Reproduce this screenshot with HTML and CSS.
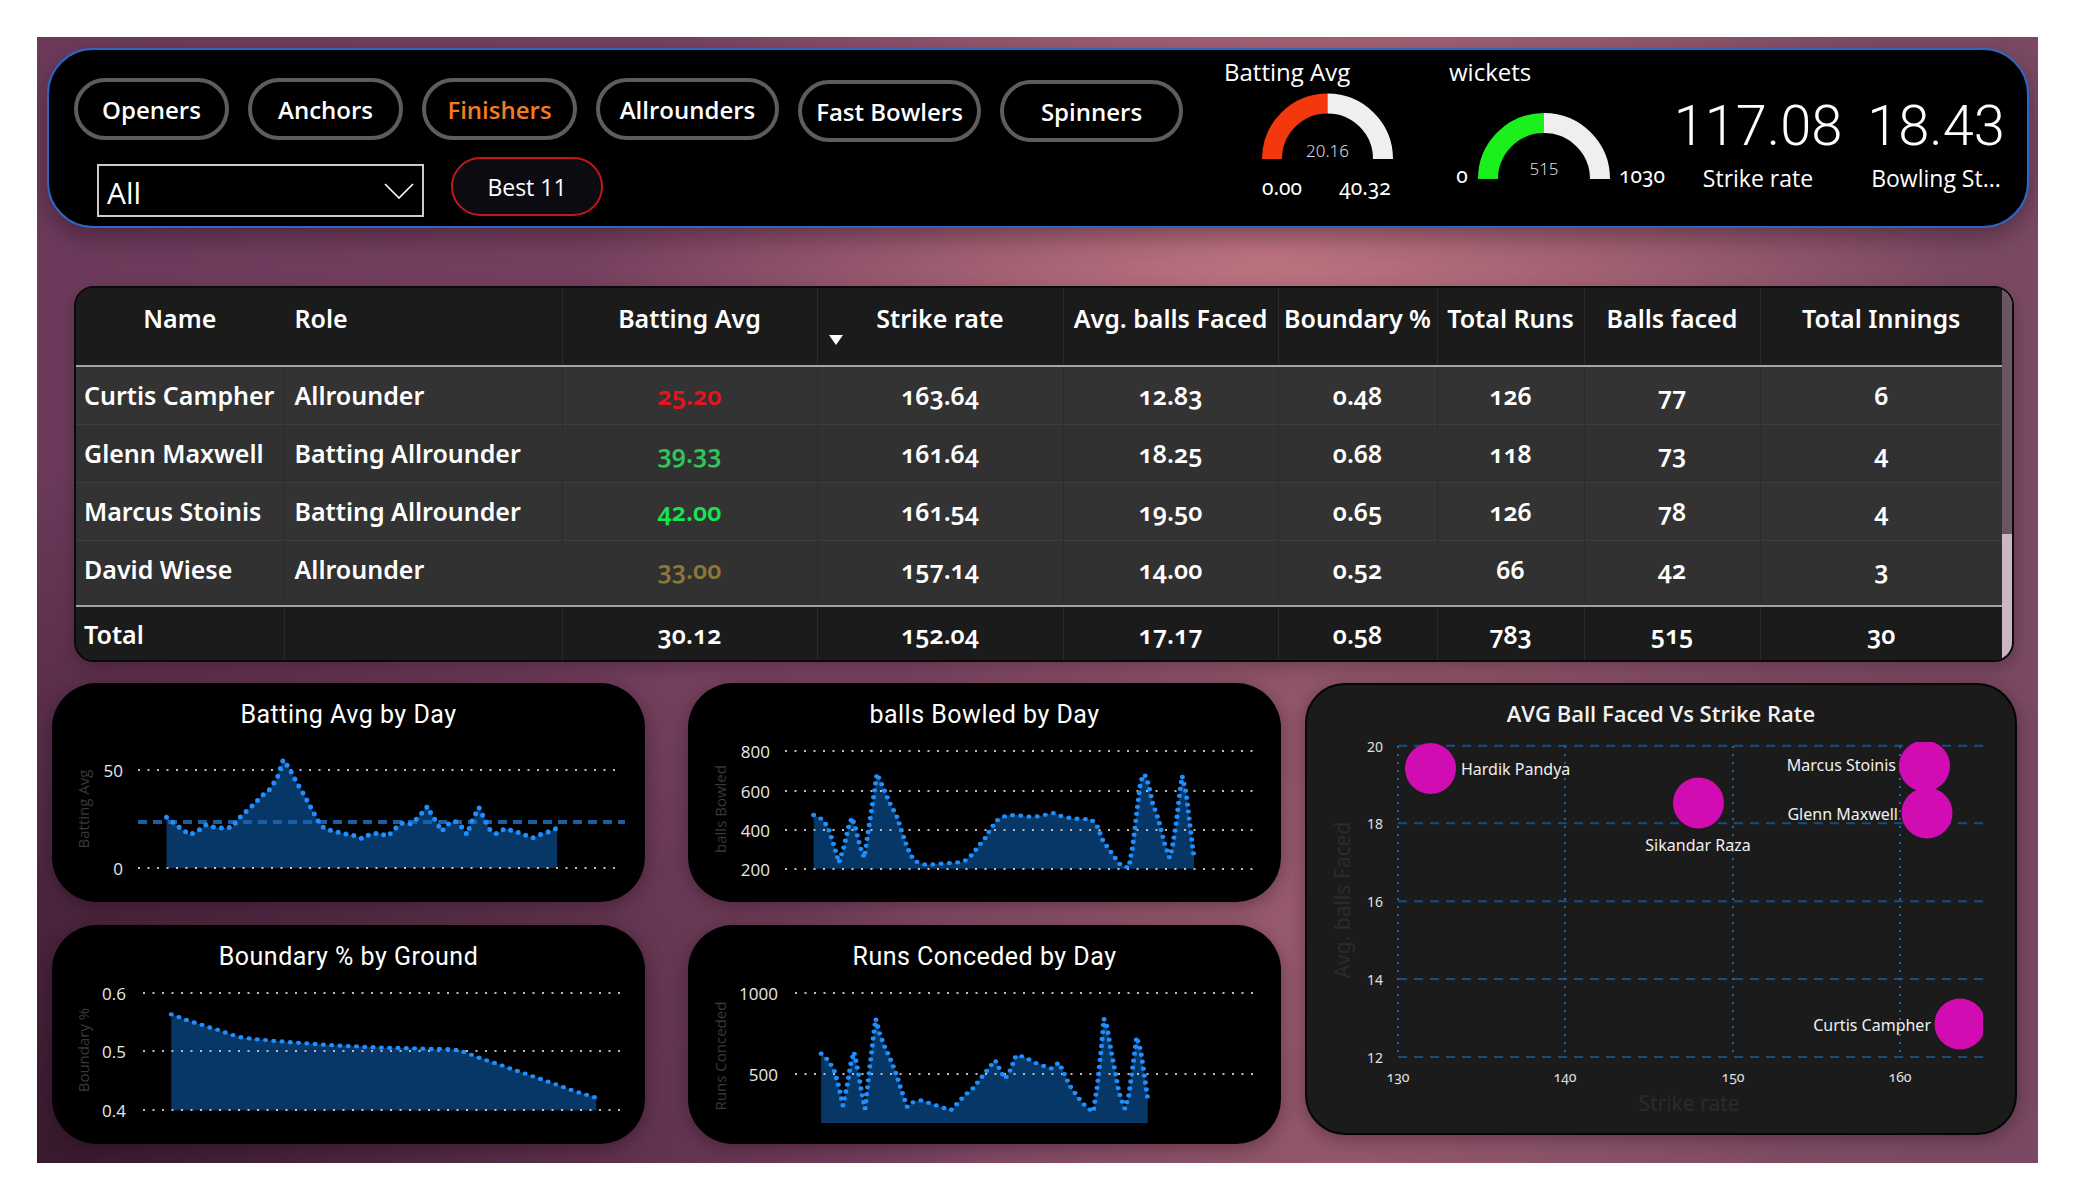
FILE: index.html
```html
<!DOCTYPE html>
<html lang="en">
<head>
<meta charset="utf-8">
<title>Cricket Dashboard</title>
<link rel="stylesheet" href="styles.css">
</head>
<body>
<div class="dash">
  <div class="hdr">
    <div class="hdr-left">
      <div class="pills">
        <div class="pill">Openers</div>
        <div class="pill">Anchors</div>
        <div class="pill active">Finishers</div>
        <div class="pill wide">Allrounders</div>
        <div class="pill wide low">Fast Bowlers</div>
        <div class="pill wide low">Spinners</div>
      </div>
      <div class="row2">
        <div class="dropdown"><span>All</span>
          <svg class="chev" width="30" height="16" viewBox="0 0 30 16"><polyline points="1,1 15,15 29,1"/></svg>
        </div>
        <div class="best">Best 11</div>
      </div>
    </div>
    <div class="hdr-right">
      <div class="gauge g1">
        <div class="g-title">Batting Avg</div>
        <svg width="225" height="124" viewBox="0 0 225 124">
          <path class="arc red" d="M48 73 A55.5 55.5 0 0 1 103.5 17.5"/>
          <path class="arc rest" d="M103.5 17.5 A55.5 55.5 0 0 1 159 73"/>
          <text class="g-val" x="103.5" y="64">20.16</text>
          <text class="g-lim" x="58" y="101">0.00</text>
          <text class="g-lim" x="141" y="101">40.32</text>
        </svg>
      </div>
      <div class="gauge g2">
        <div class="g-title">wickets</div>
        <svg width="224" height="124" viewBox="0 0 224 124">
          <path class="arc green" d="M39 93 A56 56 0 0 1 95 37"/>
          <path class="arc rest" d="M95 37 A56 56 0 0 1 151 93"/>
          <text class="g-val" x="95" y="82">515</text>
          <text class="g-lim" x="13" y="89">0</text>
          <text class="g-lim start" x="170" y="89">1030</text>
        </svg>
      </div>
      <div class="kpi">
        <div class="kpi-val">117.08</div>
        <div class="kpi-lbl">Strike rate</div>
      </div>
      <div class="kpi">
        <div class="kpi-val">18.43</div>
        <div class="kpi-lbl">Bowling St...</div>
      </div>
    </div>
  </div>

  <div class="tbl-panel">
    <table class="tbl">
      <colgroup>
        <col class="w-name"><col class="w-role"><col class="w-ba"><col class="w-sr"><col class="w-abf"><col class="w-bp"><col class="w-tr"><col class="w-bf"><col class="w-ti">
      </colgroup>
      <thead>
        <tr>
          <th>Name</th>
          <th class="l">Role</th>
          <th>Batting Avg</th>
          <th class="sr">Strike rate<span class="sort"></span></th>
          <th>Avg. balls Faced</th>
          <th>Boundary %</th>
          <th>Total Runs</th>
          <th>Balls faced</th>
          <th>Total Innings</th>
        </tr>
      </thead>
      <tbody>
        <tr><td class="name">Curtis Campher</td><td class="role">Allrounder</td><td class="v-red">25.20</td><td>163.64</td><td>12.83</td><td>0.48</td><td>126</td><td>77</td><td>6</td></tr>
        <tr><td class="name">Glenn Maxwell</td><td class="role">Batting Allrounder</td><td class="v-green">39.33</td><td>161.64</td><td>18.25</td><td>0.68</td><td>118</td><td>73</td><td>4</td></tr>
        <tr><td class="name">Marcus Stoinis</td><td class="role">Batting Allrounder</td><td class="v-lime">42.00</td><td>161.54</td><td>19.50</td><td>0.65</td><td>126</td><td>78</td><td>4</td></tr>
        <tr class="last"><td class="name">David Wiese</td><td class="role">Allrounder</td><td class="v-olive">33.00</td><td>157.14</td><td>14.00</td><td>0.52</td><td>66</td><td>42</td><td>3</td></tr>
      </tbody>
      <tfoot>
        <tr><td class="name">Total</td><td class="role"></td><td>30.12</td><td>152.04</td><td>17.17</td><td>0.58</td><td>783</td><td>515</td><td>30</td></tr>
      </tfoot>
    </table>
    <div class="scroll"><div class="thumb"></div></div>
  </div>

  <div class="charts">
    <div class="card c1">
      <div class="card-title">Batting Avg by Day</div>
      <svg class="chart" width="593" height="172" viewBox="52 732 593 172">
        <text class="ytl" transform="rotate(-90 83 811)" x="83" y="811">Batting Avg</text>
        <text class="ax" x="123" y="772">50</text>
        <text class="ax" x="123" y="870">0</text>
        <polygon class="area" points="166.5,870 166.5,819.3 174.4,825.3 182.3,831.7 190.3,836.7 198.2,832.7 206.1,826.7 214,829.3 223.1,830.3 232.2,829.3 237.7,821.7 245.6,814 253.5,806.7 261.4,798.3 269.3,791.7 277.2,780 283.2,761.7 289.1,770 297,785 304.9,798.3 312.8,813.3 318.8,824.3 324.7,830.7 334.6,833.3 344.5,835.7 354.4,837.7 362.3,840.7 370.2,836 380.1,835.3 388,838.3 393.9,831.7 401.8,825.3 411.7,825.7 417.6,820 427.5,808.3 431.5,816.7 437.4,825.3 441.4,833.3 449.3,825 455.2,823.3 461.1,828.3 467.1,836.7 471,825 478.9,809.3 484.8,821.7 490.8,833.3 496.7,835.7 504.6,830.7 512.5,832.7 522.4,836 532.3,840 540.2,836.7 548.1,834 557.2,830 557.2,870"/>
        <line class="grid" x1="138" y1="772" x2="619" y2="772"/>
        <line class="grid" x1="138" y1="870" x2="619" y2="870"/>
        <line class="avg" x1="138" y1="824" x2="625" y2="824"/>
        <polyline class="dots" points="166.5,819.3 174.4,825.3 182.3,831.7 190.3,836.7 198.2,832.7 206.1,826.7 214,829.3 223.1,830.3 232.2,829.3 237.7,821.7 245.6,814 253.5,806.7 261.4,798.3 269.3,791.7 277.2,780 283.2,761.7 289.1,770 297,785 304.9,798.3 312.8,813.3 318.8,824.3 324.7,830.7 334.6,833.3 344.5,835.7 354.4,837.7 362.3,840.7 370.2,836 380.1,835.3 388,838.3 393.9,831.7 401.8,825.3 411.7,825.7 417.6,820 427.5,808.3 431.5,816.7 437.4,825.3 441.4,833.3 449.3,825 455.2,823.3 461.1,828.3 467.1,836.7 471,825 478.9,809.3 484.8,821.7 490.8,833.3 496.7,835.7 504.6,830.7 512.5,832.7 522.4,836 532.3,840 540.2,836.7 548.1,834 557.2,830"/>
      </svg>
    </div>

    <div class="card c2">
      <div class="card-title">Boundary % by Ground</div>
      <svg class="chart" width="593" height="172" viewBox="52 975 593 172">
        <text class="ytl" transform="rotate(-90 83 1053)" x="83" y="1053">Boundary %</text>
        <text class="ax" x="126" y="996">0.6</text>
        <text class="ax" x="126" y="1054">0.5</text>
        <text class="ax" x="126" y="1113">0.4</text>
        <g transform="translate(40 670) scale(0.3954 0.33333)">
          <polygon class="area" points="332,1330 332,1042 355,1052 378,1062 400,1070 425,1080 448,1088 470,1097 490,1105 512,1112 540,1116 560,1118 585,1121 610,1123 635,1126 660,1128 685,1130 705,1132 728,1134 750,1135 775,1137 800,1138 822,1140 845,1141 870,1142 893,1143 917,1143 940,1144 965,1145 990,1146 1013,1146 1035,1147 1060,1150 1080,1158 1100,1168 1122,1177 1145,1186 1167,1195 1190,1205 1212,1214 1235,1223 1258,1233 1280,1242 1302,1251 1325,1261 1348,1271 1370,1279 1395,1288 1407,1292 1407,1330"/>
        </g>
        <line class="grid" x1="143" y1="996" x2="622" y2="996"/>
        <line class="grid" x1="143" y1="1054" x2="622" y2="1054"/>
        <line class="grid" x1="143" y1="1113" x2="622" y2="1113"/>
        <g transform="translate(40 670) scale(0.3954 0.33333)">
          <polyline class="dots-t" points="332,1042 355,1052 378,1062 400,1070 425,1080 448,1088 470,1097 490,1105 512,1112 540,1116 560,1118 585,1121 610,1123 635,1126 660,1128 685,1130 705,1132 728,1134 750,1135 775,1137 800,1138 822,1140 845,1141 870,1142 893,1143 917,1143 940,1144 965,1145 990,1146 1013,1146 1035,1147 1060,1150 1080,1158 1100,1168 1122,1177 1145,1186 1167,1195 1190,1205 1212,1214 1235,1223 1258,1233 1280,1242 1302,1251 1325,1261 1348,1271 1370,1279 1395,1288 1407,1292"/>
        </g>
      </svg>
    </div>

    <div class="card c3">
      <div class="card-title">balls Bowled by Day</div>
      <svg class="chart" width="593" height="172" viewBox="688 734 593 172">
        <text class="ytl" transform="rotate(-90 720 813)" x="720" y="813">balls Bowled</text>
        <text class="ax" x="770" y="755">800</text>
        <text class="ax" x="770" y="795">600</text>
        <text class="ax" x="770" y="834">400</text>
        <text class="ax" x="770" y="873">200</text>
        <g transform="translate(680 670) scale(0.3954 0.33333)">
          <polygon class="area" points="338,608 338,447 360,460 375,485 390,540 402,590 415,540 427,480 435,455 445,490 455,540 466,575 478,480 490,390 498,323 512,360 530,410 548,450 562,500 575,545 590,580 602,590 625,597 650,594 672,592 695,590 718,587 740,565 755,540 770,520 785,490 800,465 812,455 828,448 852,447 878,452 900,452 922,447 945,441 968,452 992,457 1017,459 1040,460 1055,480 1070,525 1085,550 1100,575 1115,598 1135,605 1145,540 1155,440 1165,345 1175,325 1185,355 1195,410 1210,460 1225,530 1238,575 1245,545 1255,470 1265,370 1270,330 1280,380 1290,480 1300,575 1300,608"/>
        </g>
        <line class="grid" x1="785" y1="755" x2="1257" y2="755"/>
        <line class="grid" x1="785" y1="795" x2="1257" y2="795"/>
        <line class="grid" x1="785" y1="834" x2="1257" y2="834"/>
        <line class="grid" x1="785" y1="873" x2="1257" y2="873"/>
        <g transform="translate(680 670) scale(0.3954 0.33333)">
          <polyline class="dots-t" points="338,447 360,460 375,485 390,540 402,590 415,540 427,480 435,455 445,490 455,540 466,575 478,480 490,390 498,323 512,360 530,410 548,450 562,500 575,545 590,580 602,590 625,597 650,594 672,592 695,590 718,587 740,565 755,540 770,520 785,490 800,465 812,455 828,448 852,447 878,452 900,452 922,447 945,441 968,452 992,457 1017,459 1040,460 1055,480 1070,525 1085,550 1100,575 1115,598 1135,605 1145,540 1155,440 1165,345 1175,325 1185,355 1195,410 1210,460 1225,530 1238,575 1245,545 1255,470 1265,370 1270,330 1280,380 1290,480 1300,575"/>
        </g>
      </svg>
    </div>

    <div class="card c4">
      <div class="card-title">Runs Conceded by Day</div>
      <svg class="chart" width="593" height="172" viewBox="688 975 593 172">
        <text class="ytl" transform="rotate(-90 720 1059)" x="720" y="1059">Runs Conceded</text>
        <text class="ax" x="778" y="996">1000</text>
        <text class="ax" x="778" y="1077">500</text>
        <g transform="translate(680 670) scale(0.3954 0.33333)">
          <polygon class="area" points="357,1368 357,1160 375,1180 390,1210 402,1260 412,1315 422,1260 432,1190 440,1155 450,1210 460,1280 468,1325 478,1220 488,1120 495,1055 505,1100 518,1140 530,1170 545,1215 560,1270 575,1320 590,1305 610,1300 635,1310 660,1320 685,1330 705,1305 720,1285 740,1265 760,1235 780,1205 797,1180 810,1210 822,1235 835,1210 850,1165 872,1170 893,1185 915,1195 938,1205 958,1187 970,1215 985,1255 1000,1280 1015,1305 1030,1322 1045,1335 1055,1260 1065,1150 1072,1055 1080,1080 1090,1150 1100,1210 1110,1275 1125,1325 1135,1285 1145,1200 1155,1110 1165,1150 1175,1230 1183,1295 1183,1368"/>
        </g>
        <line class="grid" x1="795" y1="996" x2="1257" y2="996"/>
        <line class="grid" x1="795" y1="1077" x2="1257" y2="1077"/>
        <g transform="translate(680 670) scale(0.3954 0.33333)">
          <polyline class="dots-t" points="357,1160 375,1180 390,1210 402,1260 412,1315 422,1260 432,1190 440,1155 450,1210 460,1280 468,1325 478,1220 488,1120 495,1055 505,1100 518,1140 530,1170 545,1215 560,1270 575,1320 590,1305 610,1300 635,1310 660,1320 685,1330 705,1305 720,1285 740,1265 760,1235 780,1205 797,1180 810,1210 822,1235 835,1210 850,1165 872,1170 893,1185 915,1195 938,1205 958,1187 970,1215 985,1255 1000,1280 1015,1305 1030,1322 1045,1335 1055,1260 1065,1150 1072,1055 1080,1080 1090,1150 1100,1210 1110,1275 1125,1325 1135,1285 1145,1200 1155,1110 1165,1150 1175,1230 1183,1295"/>
        </g>
      </svg>
    </div>

    <div class="card c5">
      <div class="card-title sc">AVG Ball Faced Vs Strike Rate</div>
      <svg class="chart" width="708" height="405" viewBox="1307 730 708 405">
        <defs>
          <clipPath id="plot"><rect x="1385" y="744" width="598" height="330"/></clipPath>
        </defs>
        <line class="hg" x1="1398" y1="747.7" x2="1983" y2="747.7"/>
        <line class="hg" x1="1398" y1="825.3" x2="1983" y2="825.3"/>
        <line class="hg" x1="1398" y1="903.3" x2="1983" y2="903.3"/>
        <line class="hg" x1="1398" y1="981" x2="1983" y2="981"/>
        <line class="hg" x1="1398" y1="1059" x2="1983" y2="1059"/>
        <line class="vg" x1="1398" y1="748" x2="1398" y2="1059"/>
        <line class="vg" x1="1565" y1="748" x2="1565" y2="1059"/>
        <line class="vg" x1="1733" y1="748" x2="1733" y2="1059"/>
        <line class="vg" x1="1900" y1="748" x2="1900" y2="1059"/>
        <text class="say" x="1383" y="748">20</text>
        <text class="say" x="1383" y="825">18</text>
        <text class="say" x="1383" y="903">16</text>
        <text class="say" x="1383" y="981">14</text>
        <text class="say" x="1383" y="1059">12</text>
        <text class="sax" x="1398" y="1078">130</text>
        <text class="sax" x="1565" y="1078">140</text>
        <text class="sax" x="1733" y="1078">150</text>
        <text class="sax" x="1900" y="1078">160</text>
        <text class="stitle" x="1689" y="1105">Strike rate</text>
        <text class="stitle" transform="rotate(-90 1342 902)" x="1342" y="902">Avg. balls Faced</text>
        <g clip-path="url(#plot)">
          <circle class="bub" cx="1430.5" cy="770.5" r="25.5"/>
          <circle class="bub" cx="1698.5" cy="805" r="25.5"/>
          <circle class="bub" cx="1924.5" cy="768" r="25.5"/>
          <circle class="bub" cx="1927" cy="815" r="25.5"/>
          <circle class="bub" cx="1960" cy="1026" r="25.5"/>
        </g>
        <text class="blab" x="1461" y="771">Hardik Pandya</text>
        <text class="blab mid" x="1698" y="847">Sikandar Raza</text>
        <text class="blab end" x="1896" y="767">Marcus Stoinis</text>
        <text class="blab end" x="1898" y="816">Glenn Maxwell</text>
        <text class="blab end" x="1931" y="1027">Curtis Campher</text>
      </svg>
    </div>
  </div>
</div>
</body>
</html>
```

FILE: styles.css
```css
* { box-sizing: border-box; }

html, body {
  margin: 0;
  padding: 0;
  background: #ffffff;
}

body {
  padding: 37px;
  font-family: "Noto Sans", "Open Sans", sans-serif;
  color: #ffffff;
}

.dash {
  width: 2001px;
  height: 1126px;
  padding-top: 11px;
  overflow: hidden;
  background:
    radial-gradient(ellipse 680px 420px at 1230px 220px, rgba(190, 116, 128, 0.95), rgba(190, 116, 128, 0)),
    radial-gradient(ellipse 520px 460px at 1290px 880px, rgba(160, 96, 112, 0.7), rgba(160, 96, 112, 0)),
    radial-gradient(ellipse 950px 700px at 0px 1126px, rgba(38, 14, 30, 0.75), rgba(38, 14, 30, 0)),
    linear-gradient(90deg, #6c395a 0%, #7b4462 45%, #8a5268 65%, #7a4862 100%);
}

/* ---------- header ---------- */
.hdr {
  margin-left: 10px;
  width: 1982px;
  height: 180px;
  background: #000;
  border: 2px solid #2c67c4;
  border-radius: 46px;
  display: flex;
  box-shadow: 0 10px 22px rgba(25, 5, 20, 0.35);
}

.hdr-left {
  width: 1175px;
  padding: 28px 0 0 25px;
}

.pills {
  display: flex;
  gap: 19px;
}

.pill {
  width: 155px;
  height: 62px;
  border: 4px solid #615c5a;
  border-radius: 31px;
  display: flex;
  align-items: center;
  justify-content: center;
  font-family: "Open Sans", "Noto Sans", sans-serif;
  font-size: 24px;
  font-weight: 600;
  color: #ffffff;
}

.pill.wide { width: 183px; }
.pill.low { margin-top: 2px; }
.pill.active { color: #f57b20; }

.row2 {
  display: flex;
  align-items: flex-start;
  margin: 15px 0 0 23px;
}

.dropdown {
  margin-top: 7px;
  width: 327px;
  height: 53px;
  border: 2px solid #cbcbcb;
  display: flex;
  align-items: center;
  justify-content: space-between;
  padding: 0 8px 0 8px;
  font-family: "Open Sans", "Noto Sans", sans-serif;
  font-size: 30px;
}

.dropdown span { line-height: 40px; margin-top: 4px; }

.chev polyline {
  fill: none;
  stroke: #ffffff;
  stroke-width: 1.6;
}

.best {
  margin-left: 27px;
  width: 152px;
  height: 59px;
  border: 2px solid #c4161c;
  border-radius: 30px;
  background: #0c0b12;
  display: flex;
  align-items: center;
  justify-content: center;
  font-family: "Open Sans", "Noto Sans", sans-serif;
  font-size: 23px;
  font-weight: 500;
}

.hdr-right {
  display: flex;
  padding-top: 8px;
}

.gauge {
  display: flex;
  flex-direction: column;
}

.g1 { width: 225px; }
.g2 { width: 224px; }

.g-title {
  font-family: "Open Sans", "Noto Sans", sans-serif;
  font-size: 24px;
  line-height: 28px;
  height: 28px;
}

.gauge svg { display: block; }

.arc { fill: none; stroke-width: 20; }
.arc.red { stroke: #f2380c; }
.arc.green { stroke: #1cf01c; }
.arc.rest { stroke: #efefef; }

.g-val {
  font-size: 17px;
  font-weight: 300;
  fill: #dddddd;
  text-anchor: middle;
  dominant-baseline: central;
}

.g-lim {
  font-size: 21px;
  fill: #ffffff;
  text-anchor: middle;
  dominant-baseline: central;
  font-variant-numeric: oldstyle-nums;
}

.g-lim.start { text-anchor: start; }

.kpi {
  width: 170px;
  padding-top: 37px;
  text-align: center;
}

.kpi + .kpi { margin-left: 8px; }

.kpi-val {
  font-family: Roboto, "Noto Sans", sans-serif;
  font-weight: 300;
  font-size: 56px;
  line-height: 62px;
}

.kpi-lbl {
  margin-top: 7px;
  font-family: "Open Sans", "Noto Sans", sans-serif;
  font-size: 23px;
  line-height: 28px;
  white-space: nowrap;
}

/* ---------- table ---------- */
.tbl-panel {
  margin: 58px 0 0 37px;
  width: 1940px;
  border: 2px solid #0a0a0a;
  border-radius: 20px;
  overflow: hidden;
  display: flex;
  background: #333333;
  box-shadow: 0 6px 16px rgba(25, 5, 20, 0.25);
}

.tbl {
  width: 1926px;
  table-layout: fixed;
  border-collapse: collapse;
  font-size: 25px;
  font-weight: 600;
  font-variant-numeric: oldstyle-nums;
}

.w-name { width: 208px; }
.w-role { width: 278px; }
.w-ba { width: 255px; }
.w-sr { width: 246px; }
.w-abf { width: 215px; }
.w-bp { width: 159px; }
.w-tr { width: 147px; }
.w-bf { width: 176px; }
.w-ti { width: 242px; }

.tbl th {
  height: 78px;
  padding: 15px 0 0 0;
  vertical-align: top;
  line-height: 30px;
  font-weight: 600;
  background: #1b1b1b;
  border-bottom: 2px solid #a5a5a5;
  white-space: nowrap;
}

.tbl th + th { border-left: 1px solid #2b2b2b; }
.tbl th.l { text-align: left; padding-left: 10px; border-left-color: #1b1b1b; }

.tbl th.sr { position: relative; }

.sort {
  position: absolute;
  left: 11px;
  top: 47px;
  width: 0;
  height: 0;
  border-left: 7px solid transparent;
  border-right: 7px solid transparent;
  border-top: 10px solid #ffffff;
}

.tbl td {
  height: 58px;
  padding: 0;
  text-align: center;
  vertical-align: middle;
  line-height: 30px;
  white-space: nowrap;
}

.tbl tbody td { background: #333333; }
.tbl tbody tr:nth-child(even) td { background: #313131; }
.tbl tbody tr + tr td { border-top: 1px solid #423c3e; }
.tbl tbody td + td { border-left: 1px solid #2c2c2c; }

.tbl tbody tr.last td {
  height: 66px;
  padding-bottom: 8px;
}

.tbl td.name { text-align: left; padding-left: 8px; }
.tbl td.role { text-align: left; padding-left: 10px; }

.v-red { color: #e8141c; }
.v-green { color: #2fc55a; }
.v-lime { color: #14e650; }
.v-olive { color: #8c7638; }

.tbl tfoot td {
  height: 54px;
  background: #1b1b1b;
  border-top: 2px solid #a3a3a3;
}

.tbl tfoot td + td { border-left: 1px solid #2a2a2a; }

.scroll {
  width: 10px;
  background: #cdb6c3;
  display: flex;
  flex-direction: column;
}

.thumb {
  height: 66%;
  background: #6c5465;
}

/* ---------- charts ---------- */
.charts {
  display: grid;
  grid-template-columns: 593px 43px 593px 24px 712px;
  grid-template-rows: 219px 219px;
  row-gap: 23px;
  margin: 21px 0 0 15px;
}

.card {
  background: #000000;
  border-radius: 45px;
  overflow: hidden;
  display: flex;
  flex-direction: column;
  box-shadow: 0 4px 18px rgba(20, 4, 16, 0.35);
}

.c1 { grid-column: 1; grid-row: 1; }
.c2 { grid-column: 1; grid-row: 2; }
.c3 { grid-column: 3; grid-row: 1; }
.c4 { grid-column: 3; grid-row: 2; }

.c5 {
  grid-column: 5;
  grid-row: 1 / span 2;
  align-self: start;
  height: 452px;
  background: #1b1b1b;
  border: 2px solid #050505;
  border-radius: 40px;
}

.card-title {
  padding-top: 17px;
  font-family: Roboto, "Noto Sans", sans-serif;
  font-size: 25px;
  line-height: 30px;
  letter-spacing: 0.5px;
  text-align: center;
}

.card-title.sc {
  padding-top: 13px;
  font-family: "Open Sans", "Noto Sans", sans-serif;
  font-weight: 600;
  font-size: 22px;
  letter-spacing: 0;
  color: #f2f2f2;
}

.chart { display: block; }

.area { fill: #073766; }

.dots {
  fill: none;
  stroke: #1e8fff;
  stroke-width: 5;
  stroke-linecap: round;
  stroke-dasharray: 0 8;
}

.dots-t {
  fill: none;
  stroke: #1e8fff;
  stroke-width: 13;
  stroke-linecap: round;
  stroke-dasharray: 0 21;
}

.grid {
  stroke: #bdbdbd;
  stroke-width: 2;
  stroke-dasharray: 2 7.5;
}

.avg {
  stroke: #1a5ea3;
  stroke-width: 4;
  stroke-dasharray: 9 6;
}

.ax {
  font-family: "Open Sans", "Noto Sans", sans-serif;
  font-size: 17px;
  fill: #e8e8e8;
  text-anchor: end;
  dominant-baseline: central;
}

.ytl {
  font-family: "Open Sans", "Noto Sans", sans-serif;
  font-size: 15px;
  fill: #3a3a3a;
  text-anchor: middle;
  dominant-baseline: central;
}

.hg {
  stroke: #1c4d7a;
  stroke-width: 2;
  stroke-dasharray: 9 7;
}

.vg {
  stroke: #2a64a0;
  stroke-width: 2;
  stroke-dasharray: 2 6;
}

.say, .sax {
  font-size: 14px;
  fill: #e0e0e0;
  dominant-baseline: central;
}

.say { text-anchor: end; }
.sax { text-anchor: middle; font-variant-numeric: oldstyle-nums; }

.stitle {
  font-size: 21px;
  fill: #2b2b2b;
  text-anchor: middle;
  dominant-baseline: central;
}

.bub { fill: #d20cb3; }

.blab {
  font-size: 16px;
  fill: #f0f0f0;
  dominant-baseline: central;
}

.blab.mid { text-anchor: middle; }
.blab.end { text-anchor: end; }
```
